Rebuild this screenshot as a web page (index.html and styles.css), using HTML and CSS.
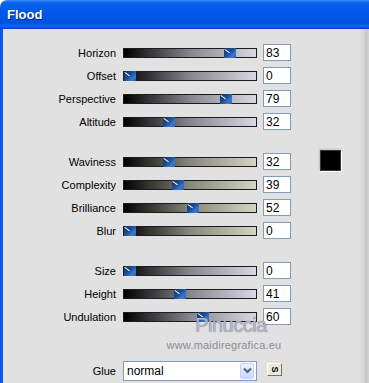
FILE: index.html
```html
<!DOCTYPE html>
<html lang="en">
<head>
    <meta charset="UTF-8">
    <title>Flood</title>
    <link rel="stylesheet" href="styles.css">
</head>
<body>
    <div class="window">
        <!-- Title Bar -->
        <div class="titlebar">
            <span class="title">Flood</span>
        </div>

        <!-- Dialog Body -->
        <div class="dialog">
            <div class="group">
                <div class="row">
                    <span class="label">Horizon</span>
                    <div class="track cool"><span class="thumb" style="left:100px"></span></div>
                    <input class="num" type="text" value="83">
                </div>
                <div class="row">
                    <span class="label">Offset</span>
                    <div class="track cool"><span class="thumb" style="left:0px"></span></div>
                    <input class="num" type="text" value="0">
                </div>
                <div class="row">
                    <span class="label">Perspective</span>
                    <div class="track cool"><span class="thumb" style="left:96px"></span></div>
                    <input class="num" type="text" value="79">
                </div>
                <div class="row">
                    <span class="label">Altitude</span>
                    <div class="track cool"><span class="thumb" style="left:39px"></span></div>
                    <input class="num" type="text" value="32">
                </div>
            </div>

            <div class="group">
                <div class="row">
                    <span class="label">Waviness</span>
                    <div class="track warm"><span class="thumb" style="left:39px"></span></div>
                    <input class="num" type="text" value="32">
                    <span class="swatch"></span>
                </div>
                <div class="row">
                    <span class="label">Complexity</span>
                    <div class="track warm"><span class="thumb" style="left:48px"></span></div>
                    <input class="num" type="text" value="39">
                </div>
                <div class="row">
                    <span class="label">Brilliance</span>
                    <div class="track warm"><span class="thumb" style="left:63px"></span></div>
                    <input class="num" type="text" value="52">
                </div>
                <div class="row">
                    <span class="label">Blur</span>
                    <div class="track warm"><span class="thumb" style="left:0px"></span></div>
                    <input class="num" type="text" value="0">
                </div>
            </div>

            <div class="group">
                <div class="row">
                    <span class="label">Size</span>
                    <div class="track cool"><span class="thumb" style="left:0px"></span></div>
                    <input class="num" type="text" value="0">
                </div>
                <div class="row">
                    <span class="label">Height</span>
                    <div class="track cool"><span class="thumb" style="left:50px"></span></div>
                    <input class="num" type="text" value="41">
                </div>
                <div class="row">
                    <span class="label">Undulation</span>
                    <div class="track cool"><span class="thumb" style="left:73px"></span></div>
                    <input class="num" type="text" value="60">
                </div>
            </div>

            <div class="row glue-row">
                <span class="label">Glue</span>
                <div class="select">
                    <span class="select-text">normal</span>
                    <span class="select-btn">
                        <svg width="9" height="7" viewBox="0 0 9 7">
                            <path d="M1 1.5 L4.5 5 L8 1.5" fill="none" stroke="#4d6185" stroke-width="2"/>
                        </svg>
                    </span>
                </div>
                <span class="s-btn"><span class="s-glyph">S</span></span>
            </div>

            <!-- Watermark -->
            <div class="watermark">
                <span class="wm-name">Pinuccia</span>
                <span class="wm-url">www.maidiregrafica.eu</span>
            </div>
        </div>
    </div>
</body>
</html>
```

FILE: styles.css
```css
/* General Styles */
body {
    margin: 0;
    padding: 0;
    background: #fff;
    font-family: 'Liberation Sans', Arial, sans-serif;
    font-size: 11px;
    color: #000;
    overflow: hidden;
}

.window {
    width: 369px;
    height: 383px;
    display: flex;
    flex-direction: column;
}

/* Title Bar */
.titlebar {
    height: 29px;
    flex-shrink: 0;
    border-top-left-radius: 7px;
    background: linear-gradient(#3c8dff 0, #0a62ee 3px, #0058ea 40%, #0052de 80%, #1565ee 90%, #0040c4 100%);
    display: flex;
    align-items: center;
    padding-left: 7px;
}

.title {
    color: #fff;
    font-weight: bold;
    font-size: 13px;
    text-shadow: 1px 1px 0 #0a2a80;
    margin-top: -1px;
}

/* Dialog Body */
.dialog {
    flex: 1;
    position: relative;
    border-left: 3px solid #0a5ae6;
    box-shadow: inset 1px 0 0 #d6e2f6;
    background: linear-gradient(to right, #e1e1e1 calc(100% - 10px), #d6d6d6 calc(100% - 5px), #c4c4c4 calc(100% - 3px), #d2d2d2);
    padding-top: 12px;
}

.group {
    margin-bottom: 17px;
}

.row {
    display: flex;
    align-items: center;
    height: 23px;
}

.label {
    width: 113px;
    text-align: right;
    margin-right: 7px;
    white-space: nowrap;
}

/* Slider */
.track {
    position: relative;
    width: 134px;
    height: 10px;
    box-sizing: border-box;
    border: 1px solid #1c1c1c;
    margin-right: 6px;
}

.track.cool {
    background: linear-gradient(to right, #000, #86868e 50%, #d8d8e4);
}

.track.warm {
    background: linear-gradient(to right, #000, #88887c 50%, #d4d4c4);
}

.thumb {
    position: absolute;
    top: -1px;
    width: 12px;
    height: 10px;
    background: linear-gradient(135deg, #14305e 0%, #1e4c92 45%, #3a7ad4 75%, #2458a8 100%);
    overflow: hidden;
}

.thumb::before {
    content: '';
    position: absolute;
    top: 1px;
    left: 1px;
    width: 6px;
    height: 1px;
    background: #fff;
    transform: rotate(35deg);
    transform-origin: 0 0;
}

/* Number Input */
.num {
    width: 28px;
    height: 17px;
    box-sizing: border-box;
    border: 1px solid #7f9db9;
    background: #fff;
    padding: 0 2px;
    margin: 0;
    font-family: 'Liberation Sans', Arial, sans-serif;
    font-size: 12px;
    color: #000;
    outline: none;
}

.swatch {
    width: 21px;
    height: 21px;
    box-sizing: border-box;
    margin-left: 29px;
    margin-bottom: 3px;
    background: #000;
    border: 1px solid #3a3a3a;
    box-shadow: 1px 1px 0 #fff, -1px -1px 2px rgba(0, 0, 0, 0.15);
}

/* Glue Row */
.glue-row {
    margin-top: 31px;
}

.select {
    width: 134px;
    height: 20px;
    box-sizing: border-box;
    border: 1px solid #7f9db9;
    background: #fff;
    display: flex;
    align-items: center;
    justify-content: space-between;
    padding: 0 2px 0 3px;
    font-size: 12px;
}

.select-btn {
    width: 14px;
    height: 16px;
    box-sizing: border-box;
    border: 1px solid #c3d3f8;
    border-radius: 2px;
    background: linear-gradient(#eef3fe, #c8d8fa);
    display: flex;
    align-items: center;
    justify-content: center;
}

.s-btn {
    width: 15px;
    height: 13px;
    box-sizing: border-box;
    margin-left: 10px;
    margin-bottom: 2px;
    background: #ece9d8;
    border: 1px solid;
    border-color: #fff #716f64 #716f64 #fff;
    display: flex;
    align-items: center;
    justify-content: center;
}

.s-glyph {
    font-size: 9px;
    font-weight: bold;
    transform: rotate(90deg);
    line-height: 1;
}

/* Watermark */
.watermark {
    position: absolute;
    left: 157px;
    top: 284px;
    display: flex;
    flex-direction: column;
    align-items: center;
    width: 128px;
}

.wm-name {
    font-size: 20px;
    color: #b4b4c8;
    text-shadow: 0 0 1px #6a6a80;
    letter-spacing: -0.5px;
    line-height: 24px;
    margin-left: 14px;
}

.wm-url {
    font-size: 11px;
    color: #8c8c98;
    letter-spacing: 0.2px;
    line-height: 14px;
    margin-top: 1px;
}
```
